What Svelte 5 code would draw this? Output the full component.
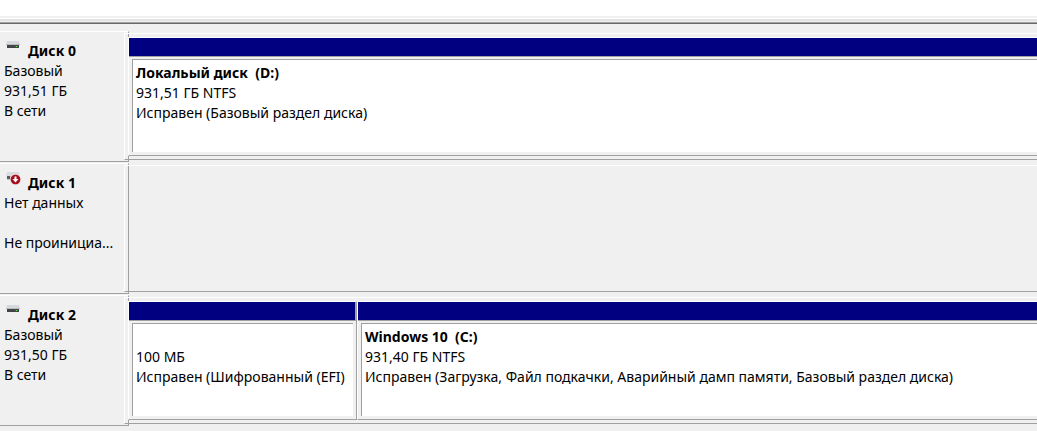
<script>
	const disks = [
		{
			name: 'Диск 0',
			lines: ['Базовый', '931,51 ГБ', 'В сети'],
			volumes: [
				{
					name: 'Локальый диск  (D:)',
					size: '931,51 ГБ NTFS',
					status: 'Исправен (Базовый раздел диска)',
					wide: true
				}
			]
		},
		{
			name: 'Диск 1',
			offline: true,
			lines: ['Нет данных', '', 'Не проинициа...'],
			volumes: []
		},
		{
			name: 'Диск 2',
			lines: ['Базовый', '931,50 ГБ', 'В сети'],
			volumes: [
				{ name: '', size: '100 МБ', status: 'Исправен (Шифрованный (EFI)' },
				{
					name: 'Windows 10  (C:)',
					size: '931,40 ГБ NTFS',
					status: 'Исправен (Загрузка, Файл подкачки, Аварийный дамп памяти, Базовый раздел диска)',
					wide: true
				}
			]
		}
	];
</script>

<main>
	<div class="list-end"></div>
	<div class="splitter"></div>

	{#each disks as disk}
		<section class="disk">
			<header class="label">
				<div class="title">
					<svg width="17" height="16" viewBox="0 0 17 16" aria-hidden="true">
						{#if disk.offline}
							<path d="M3 0h12l1 4H2z" fill="#d9dbde" />
							<path d="M3 4h12v4H3z" fill="#c4c4c6" />
							<path d="M3 4h3v3H3z" fill="#5c5c5c" />
							<circle cx="11.5" cy="7.5" r="5.5" fill="#e6d4d6" />
							<circle cx="11.5" cy="7.5" r="4.8" fill="#a80c1c" />
							<path d="M10.5 4.5h2v2.5h2l-3 3.5-3-3.5h2z" fill="#fff" />
						{:else}
							<path d="M3 1h12l1 4H2z" fill="#d5d8dc" />
							<path d="M2 4h14v1H2z" fill="#b9bcc0" />
							<path d="M3 5h12v3H3z" fill="#444" />
							<path d="M11 6h3v1h-3z" fill="#1f8a1f" />
							<path d="M12 6h1v1h-1z" fill="#3cff3c" />
						{/if}
					</svg>
					<h2>{disk.name}</h2>
				</div>
				{#each disk.lines as line}
					<p>{line}</p>
				{/each}
			</header>

			<div class="graph">
				<div class="volumes">
					{#each disk.volumes as volume}
						<article class="volume" class:wide={volume.wide}>
							<div class="bar"></div>
							<div class="info">
								<h3>{volume.name}</h3>
								<p>{volume.size}</p>
								<p>{volume.status}</p>
							</div>
						</article>
					{/each}
				</div>
			</div>
		</section>
	{/each}
</main>

<style>
	:global(body) {
		margin: 0;
		background: #f0f0f0;
	}
	main {
		overflow: hidden;
		background: #f0f0f0;
		color: #000;
		font: 14px/20px 'Noto Sans', 'Open Sans', sans-serif;
	}
	h2,
	h3,
	p {
		margin: 0;
		height: 20px;
		font-size: 14px;
		line-height: 20px;
		white-space: pre;
	}
	.list-end {
		height: 16px;
		background: #fff;
	}
	.splitter {
		height: 4px;
		margin: 2px 0 7px;
		border-top: 1px solid #fff;
		border-bottom: 1px solid #696969;
		box-shadow:
			inset 0 -1px #a0a0a0,
			inset 0 2px #e3e3e3;
	}
	.disk {
		display: flex;
		margin-bottom: 1px;
	}
	.label {
		box-sizing: border-box;
		flex: none;
		width: 129px;
		height: 131px;
		padding: 8px 8px 0 4px;
		border: solid #a0a0a0;
		border-width: 1px 1px 1px 0;
		border-top-color: #fff;
	}
	.title {
		display: flex;
		align-items: flex-end;
		gap: 7px;
		height: 21px;
	}
	.title svg {
		align-self: flex-start;
	}
	/* overlaps the label's right edge and runs past the window, like a scrolled view */
	.graph {
		flex: 1;
		min-width: 0;
		box-sizing: border-box;
		height: 127px;
		margin: 2px -8px 0 -5px;
		padding: 3px 0 3px 3px;
		border: solid #fff;
		border-width: 1px 0 1px 1px;
		border-bottom-color: #a0a0a0;
	}
	.volumes {
		display: flex;
		height: 100%;
	}
	.volume {
		display: flex;
		flex-direction: column;
		box-sizing: border-box;
		width: 229px;
		background: #f0f0f0;
		border: 1px solid #a0a0a0;
		border-top-color: #fff;
		border-left-color: #fff;
	}
	.volume.wide {
		flex: 1;
		min-width: 0;
	}
	.bar {
		height: 18px;
		background: #000080;
		border-right: 1px solid #a0a0a0;
		border-bottom: 1px solid #a0a0a0;
	}
	.info {
		flex: 1;
		margin: 2px 3px 3px;
		padding: 3px;
		background: #fff;
		border: solid #a0a0a0;
		border-width: 1px 0 0 1px;
	}
	.info p {
		overflow: hidden;
	}
</style>
